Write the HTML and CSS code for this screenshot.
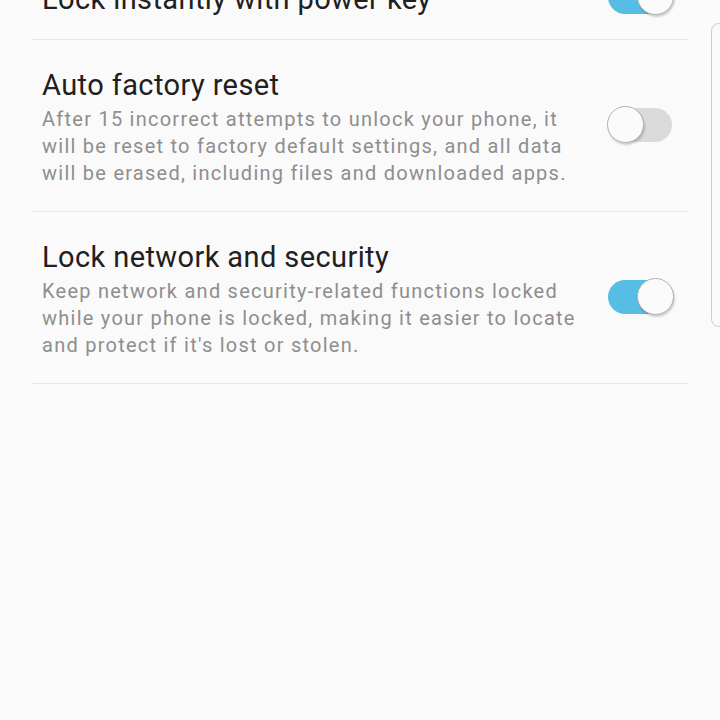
FILE: index.html
```html
<!DOCTYPE html>
<html lang="en">

<head>
  <meta charset="UTF-8">
  <title>Lock screen security</title>
  <link rel="stylesheet" href="styles.css">
</head>

<body>

  <div class="settings-list">
    <div class="setting-row single">
      <div class="setting-text">
        <div class="setting-title">Lock instantly with power key</div>
      </div>
      <div class="switch on"><span class="knob"></span></div>
    </div>

    <div class="setting-row">
      <div class="setting-text">
        <div class="setting-title">Auto factory reset</div>
        <div class="setting-desc">After 15 incorrect attempts to unlock your phone, it will be reset to factory default
          settings, and all data will be erased, including files and downloaded apps.</div>
      </div>
      <div class="switch"><span class="knob"></span></div>
    </div>

    <div class="setting-row">
      <div class="setting-text">
        <div class="setting-title">Lock network and security</div>
        <div class="setting-desc">Keep network and security-related functions locked while your phone is locked, making
          it easier to locate and protect if it's lost or stolen.</div>
      </div>
      <div class="switch on"><span class="knob"></span></div>
    </div>
  </div>

  <div class="scroll-hint"></div>

</body>

</html>
```

FILE: styles.css
```css
body {
  margin: 0;
  font-family: Roboto, "Liberation Sans", sans-serif;
  background-color: #fafafa;
  height: 720px;
  overflow: hidden;
}

.settings-list {
  margin: -43px 32px 0 32px;
}

.setting-row {
  display: flex;
  align-items: center;
  padding: 27px 16px 24px 10px;
  border-bottom: 1px solid #e8e8e8;
}

.setting-row.single {
  padding-top: 24px;
  padding-bottom: 22px;
}

.setting-text {
  flex: 1;
  min-width: 0;
}

.setting-title {
  font-size: 29px;
  line-height: 36px;
  letter-spacing: 0.4px;
  color: #202020;
}

.setting-desc {
  margin-top: 3px;
  font-size: 20px;
  line-height: 27px;
  letter-spacing: 1.25px;
  color: #8e8e8e;
}

.switch {
  position: relative;
  flex: none;
  width: 64px;
  height: 34px;
  margin-left: 30px;
  margin-top: -4px;
  border-radius: 17px;
  background: #dadada;
}

.switch.on {
  background: #56bde5;
}

.knob {
  position: absolute;
  top: -2px;
  left: -1px;
  width: 35px;
  height: 35px;
  border-radius: 50%;
  background: #fbfbfb;
  border: 1.5px solid #b3b3b3;
  box-shadow: 1px 2px 2px rgba(0, 0, 0, 0.18);
}

.switch.on .knob {
  left: auto;
  right: -2px;
}

.scroll-hint {
  position: absolute;
  top: 23px;
  left: 711px;
  width: 20px;
  height: 302px;
  border: 1.5px solid #cdcdcd;
  border-radius: 8px;
}
```
